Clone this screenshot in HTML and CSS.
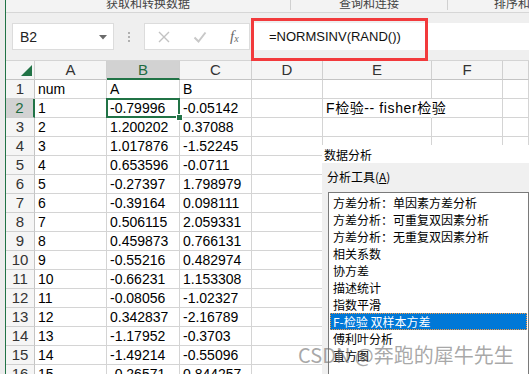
FILE: index.html
```html
<!DOCTYPE html>
<html lang="zh">
<head>
<meta charset="utf-8">
<link rel="stylesheet" href="styles.css">
</head>
<body>
<div class="app">
  <div class="ribbon">
    <div class="rgroup g1"><span>获取和转换数据</span></div>
    <div class="rgroup g2"><span>查询和连接</span></div>
    <div class="rgroup g3"><span>排序和筛选</span></div>
  </div>
  <div class="fbar">
    <div class="namebox"><span>B2</span><svg class="caret" width="8" height="5" viewBox="0 0 8 5"><polygon points="0,0 8,0 4,4.5" fill="#6a6a6a"/></svg></div>
    <div class="grip"><i></i><i></i><i></i></div>
    <div class="fbtns">
      <svg width="14" height="14" viewBox="0 0 14 14"><path d="M2 2 L12 12 M12 2 L2 12" stroke="#c2c2c2" stroke-width="1.4" fill="none"/></svg>
      <svg width="14" height="14" viewBox="0 0 14 14"><path d="M1.5 7.5 L5.5 11.5 L12.5 2.5" stroke="#c8c8c8" stroke-width="2" fill="none"/></svg>
      <span class="fx"><i>f</i><sub>x</sub></span>
    </div>
    <div class="finput">=NORMSINV(RAND())</div>
  </div>
  <div class="sheet">
    <div class="h corner"><svg width="11" height="11" viewBox="0 0 11 11"><polygon points="11,0 11,11 0,11" fill="#217346"/></svg></div>
    <div class="h">A</div><div class="h hs">B</div><div class="h">C</div><div class="h">D</div><div class="h">E</div><div class="h">F</div><div class="h"></div>

    <div class="rh">1</div><div class="c">num</div><div class="c">A</div><div class="c">B</div><div class="c"></div><div class="c"></div><div class="c"></div><div class="c"></div>
    <div class="rh rhs">2</div><div class="c">1</div><div class="c sel">-0.79996</div><div class="c">-0.05142</div><div class="c"></div><div class="c over">F检验-- fisher检验</div><div class="c"></div><div class="c"></div>
    <div class="rh">3</div><div class="c">2</div><div class="c">1.200202</div><div class="c">0.37088</div><div class="c"></div><div class="c"></div><div class="c"></div><div class="c"></div>
    <div class="rh">4</div><div class="c">3</div><div class="c">1.017876</div><div class="c">-1.52245</div><div class="c"></div><div class="c"></div><div class="c"></div><div class="c"></div>
    <div class="rh">5</div><div class="c">4</div><div class="c">0.653596</div><div class="c">-0.0711</div><div class="c"></div><div class="c"></div><div class="c"></div><div class="c"></div>
    <div class="rh">6</div><div class="c">5</div><div class="c">-0.27397</div><div class="c">1.798979</div><div class="c"></div><div class="c"></div><div class="c"></div><div class="c"></div>
    <div class="rh">7</div><div class="c">6</div><div class="c">-0.39164</div><div class="c">0.098111</div><div class="c"></div><div class="c"></div><div class="c"></div><div class="c"></div>
    <div class="rh">8</div><div class="c">7</div><div class="c">0.506115</div><div class="c">2.059331</div><div class="c"></div><div class="c"></div><div class="c"></div><div class="c"></div>
    <div class="rh">9</div><div class="c">8</div><div class="c">0.459873</div><div class="c">0.766131</div><div class="c"></div><div class="c"></div><div class="c"></div><div class="c"></div>
    <div class="rh">10</div><div class="c">9</div><div class="c">-0.55216</div><div class="c">0.482974</div><div class="c"></div><div class="c"></div><div class="c"></div><div class="c"></div>
    <div class="rh">11</div><div class="c">10</div><div class="c">-0.66231</div><div class="c">1.153308</div><div class="c"></div><div class="c"></div><div class="c"></div><div class="c"></div>
    <div class="rh">12</div><div class="c">11</div><div class="c">-0.08056</div><div class="c">-1.02327</div><div class="c"></div><div class="c"></div><div class="c"></div><div class="c"></div>
    <div class="rh">13</div><div class="c">12</div><div class="c">0.342837</div><div class="c">-2.16789</div><div class="c"></div><div class="c"></div><div class="c"></div><div class="c"></div>
    <div class="rh">14</div><div class="c">13</div><div class="c">-1.17952</div><div class="c">-0.3703</div><div class="c"></div><div class="c"></div><div class="c"></div><div class="c"></div>
    <div class="rh">15</div><div class="c">14</div><div class="c">-1.49214</div><div class="c">-0.55096</div><div class="c"></div><div class="c"></div><div class="c"></div><div class="c"></div>
    <div class="rh">16</div><div class="c">15</div><div class="c">-0.26571</div><div class="c">0.844257</div><div class="c"></div><div class="c"></div><div class="c"></div><div class="c"></div>
  </div>
</div>
<div class="redbox"></div>
<div class="dialog">
  <div class="dtitle">数据分析</div>
  <div class="dbody">
    <div class="dlabel">分析工具(<u>A</u>)</div>
    <div class="dlist">
      <div class="item">方差分析：单因素方差分析</div>
      <div class="item">方差分析：可重复双因素分析</div>
      <div class="item">方差分析：无重复双因素分析</div>
      <div class="item">相关系数</div>
      <div class="item">协方差</div>
      <div class="item">描述统计</div>
      <div class="item">指数平滑</div>
      <div class="item active">F-检验 双样本方差</div>
      <div class="item">傅利叶分析</div>
      <div class="item">直方图</div>
    </div>
  </div>
</div>
<div class="watermark">CSDN @奔跑的犀牛先生</div>
</body>
</html>
```

FILE: styles.css
```css
html, body {
  margin: 0;
  padding: 0;
}
body {
  width: 529px;
  height: 374px;
  overflow: hidden;
  position: relative;
  background: #ececec;
  font-family: "Liberation Sans", "Noto Sans CJK SC", sans-serif;
  color: #000;
}
.app {
  margin-left: 5px;
  border-left: 1px solid #217346;
  height: 374px;
  overflow: hidden;
  background: #fff;
  display: flex;
  flex-direction: column;
}
.app > * {
  flex: none;
}
.ribbon {
  height: 13px;
  box-sizing: border-box;
  border-bottom: 1px solid #d6d6d6;
  background: #f3f3f3;
  display: flex;
  overflow: hidden;
  font-family: "Noto Sans CJK SC", sans-serif;
  font-size: 12px;
  color: #444;
}
.rgroup {
  flex: none;
  text-align: center;
  line-height: 12px;
  height: 10px;
  border-right: 1px solid #d0d0d0;
}
.rgroup span {
  display: block;
  margin-top: -3px;
}
.g1 { width: 284px; }
.g2 { width: 156px; }
.g3 { width: 152px; border-right: none; }

.fbar {
  height: 48px;
  box-sizing: border-box;
  background: #efefef;
  border-bottom: 1px solid #d4d4d4;
  padding: 10px 0 0 6px;
  display: flex;
  align-items: flex-start;
}
.namebox {
  width: 102px;
  height: 27px;
  box-sizing: border-box;
  background: #fff;
  border: 1px solid #dcdcdc;
  display: flex;
  align-items: center;
  justify-content: space-between;
  padding: 0 6px 0 7px;
  font-size: 14px;
  color: #222;
}
.caret { margin-top: 1px; }
.grip {
  width: 30px;
  height: 27px;
  display: flex;
  flex-direction: column;
  align-items: center;
  justify-content: center;
  gap: 2px;
}
.grip i {
  width: 2px;
  height: 2px;
  background: #b0b0b0;
  display: block;
}
.fbtns {
  width: 106px;
  height: 27px;
  box-sizing: border-box;
  background: #fff;
  border: 1px solid #dcdcdc;
  display: flex;
  align-items: center;
  padding-left: 12px;
  gap: 22px;
}
.fx {
  font-family: "Liberation Serif", serif;
  font-style: italic;
  color: #6a6a6a;
  font-size: 15px;
  margin-left: 1px;
}
.fx i { font-style: italic; }
.fx sub { font-size: 10px; vertical-align: -1px; }
.finput {
  flex: 1;
  height: 27px;
  margin-left: 1px;
  background: #fff;
  font-size: 13px;
  line-height: 27px;
  padding-left: 18px;
  color: #111;
}
.redbox {
  position: absolute;
  left: 251px;
  top: 18px;
  width: 177px;
  height: 43px;
  box-sizing: border-box;
  border: 3px solid #f23a3c;
}

.sheet {
  display: grid;
  grid-template-columns: 29px 72px 73px 72px 71px 109px 71px 1fr;
  grid-auto-rows: 19px;
  font-size: 14px;
}
.h {
  background: #f5f5f5;
  border-right: 1px solid #d0d0d0;
  border-bottom: 1px solid #c4c4c4;
  box-sizing: border-box;
  text-align: center;
  line-height: 18px;
  color: #333;
  font-size: 15px;
}
.corner {
  display: flex;
  align-items: flex-end;
  justify-content: flex-end;
  padding: 0 2px 3px 0;
}
.corner svg { display: block; }
.hs {
  background: #d2d2d2;
  color: #1d6b41;
  border-bottom: 2px solid #217346;
}
.rh {
  background: #f5f5f5;
  border-right: 1px solid #c4c4c4;
  border-bottom: 1px solid #d0d0d0;
  box-sizing: border-box;
  text-align: center;
  line-height: 18px;
  color: #333;
  font-size: 15px;
}
.rhs {
  background: #d2d2d2;
  color: #1d6b41;
  border-right: 2px solid #217346;
}
.c {
  border-right: 1px solid #d4d4d4;
  border-bottom: 1px solid #d4d4d4;
  box-sizing: border-box;
  padding-left: 3px;
  line-height: 18px;
  white-space: nowrap;
  overflow: hidden;
}
.over {
  overflow: visible;
  border-right-color: transparent;
  position: relative;
  z-index: 1;
  letter-spacing: 0.6px;
}
.sel {
  position: relative;
  overflow: visible;
}
.sel::after {
  content: "";
  position: absolute;
  left: -1px;
  top: -1px;
  right: -1px;
  bottom: -1px;
  border: 2px solid #217346;
}
.sel::before {
  content: "";
  position: absolute;
  right: -4px;
  bottom: -4px;
  width: 5px;
  height: 5px;
  background: #217346;
  border: 1px solid #fff;
  z-index: 2;
}

.dialog {
  position: absolute;
  left: 322px;
  top: 145px;
  right: 0;
  bottom: 0;
  background: #fff;
  font-family: "Noto Sans CJK SC", sans-serif;
  font-size: 12px;
  color: #000;
  display: flex;
  flex-direction: column;
}
.dtitle {
  height: 24px;
  box-sizing: border-box;
  padding: 2px 0 0 2px;
  line-height: 16px;
}
.dbody {
  flex: 1;
  background: #f0f0f0;
  padding: 6px 0 0 5px;
}
.dlabel {
  line-height: 16px;
  height: 16px;
}
.dlabel u { text-decoration-thickness: 1px; text-underline-offset: 1px; }
.dlist {
  margin: 7px 0 0 1px;
  background: #fff;
  border: 1px solid #7a7a7a;
  padding: 1px;
  height: 200px;
}
.item {
  height: 17px;
  line-height: 17px;
  padding-left: 3px;
  white-space: nowrap;
  box-sizing: border-box;
}
.active {
  background: #0078d7;
  color: #fff;
  outline: 1px dotted #ff9a3c;
  outline-offset: -1px;
}
.watermark {
  position: absolute;
  left: 298px;
  top: 343px;
  font-family: "Noto Sans CJK SC", sans-serif;
  font-size: 20px;
  line-height: 24px;
  color: rgba(110, 110, 110, 0.6);
  white-space: nowrap;
}
```
